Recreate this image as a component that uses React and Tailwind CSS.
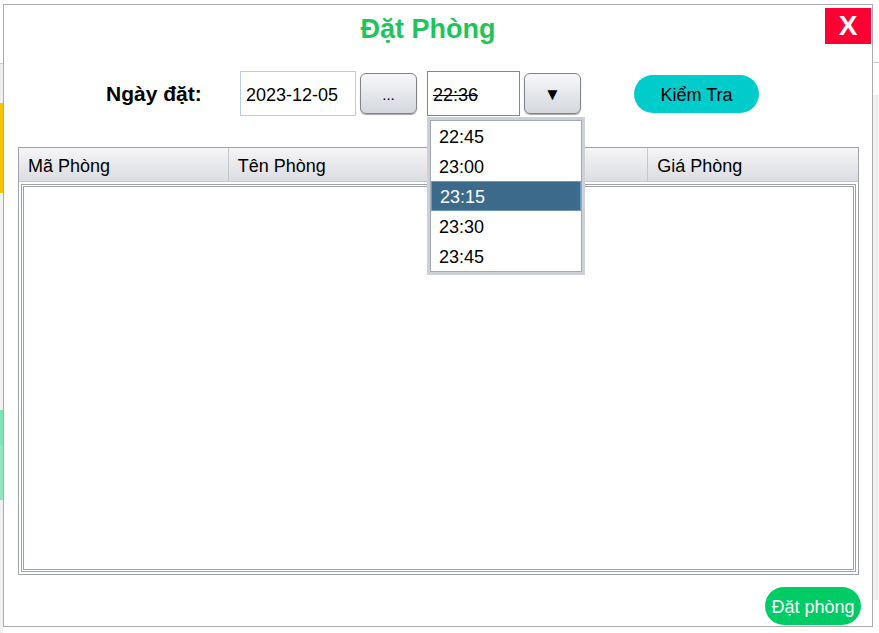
import { useState } from 'react'

const times = ['22:45', '23:00', '23:15', '23:30', '23:45']
// the third header is hidden behind the open combo popup
const columns = ['Mã Phòng', 'Tên Phòng', '', 'Giá Phòng']

const GrayButton = ({ children, className = '' }) => (
  <button
    className={`h-[41px] w-[57px] rounded-[6px] border border-[#808388] bg-gradient-to-b from-[#f7f8fa] to-[#d4d7dd] text-black shadow-[0_1px_1px_rgba(0,0,0,0.35)] flex items-center justify-center ${className}`}
  >
    {children}
  </button>
)

const App = () => {
  const [selected] = useState('23:15')

  return (
    <div className="w-[879px] h-[633px] bg-white overflow-hidden flex font-['Liberation_Sans',Arial,sans-serif] text-black">
      {/* app behind the dialog, left edge */}
      <div className="w-[3px] flex flex-col">
        <div className="h-[63px] bg-white" />
        <div className="h-[40px] bg-[#eeeeee] border-t border-[#c9c9c9]" />
        <div className="h-[90px] bg-[#f7c400]" />
        <div className="h-[217px] bg-[#f3f3f3]" />
        <div className="h-[35px] bg-[#7fe3b5]" />
        <div className="h-[55px] bg-[#8ee8bf]" />
        <div className="flex-1 bg-[#f1f1f1]" />
      </div>

      {/* dialog */}
      <div className="mt-[4px] w-[870px] h-[623px] border border-[#ababab] bg-white flex flex-col">
        <div className="mt-[3px] h-[36px] flex">
          <div className="flex-1 pl-[27px] flex justify-center">
            <h1 className="text-[27px] font-bold text-[#1fc55c] leading-none pt-[8px]">Đặt Phòng</h1>
          </div>
          <button className="mr-[1px] w-[46px] h-[36px] bg-[#ff0033] text-white text-[28px] font-bold leading-none flex items-center justify-center">
            X
          </button>
        </div>

        <div className="mt-[27px] h-[45px] flex items-center pl-[102px]">
          <span className="w-[134px] text-[21px] font-bold">Ngày đặt:</span>
          <div className="w-[116px] h-[45px] border border-[#b7cee6] flex items-center pl-[5px] pt-[3px] text-[18px]">
            2023-12-05
          </div>
          <GrayButton className="ml-[4px] text-[15px] pt-[3px]">...</GrayButton>
          <div className="relative ml-[10px]">
            <div className="w-[93px] h-[45px] border border-[#7c8894] flex items-center pl-[5px] pt-[3px] text-[18px]">
              <span className="line-through">22:36</span>
            </div>
            {/* open combo popup */}
            <div className="absolute z-10 top-[46px] left-0 w-[158px] border-[3px] border-[#cdd0d6] bg-white">
              <div className="border border-[#a2a9b3] flex flex-col">
                {times.map((t) => (
                  <div
                    key={t}
                    className={`h-[30px] flex items-center pl-[8px] pt-[2px] text-[18px] ${
                      t === selected ? 'bg-[#3b6a8b] text-white border border-[#6f9ac0] pl-[7px]' : ''
                    }`}
                  >
                    {t}
                  </div>
                ))}
              </div>
            </div>
          </div>
          <GrayButton className="ml-[4px] text-[17px] pt-[3px]">▼</GrayButton>
          <button className="ml-[53px] w-[125px] h-[38px] rounded-full bg-[#00cccc] text-[18px] pt-[3px] flex items-center justify-center">
            Kiểm Tra
          </button>
        </div>

        <div className="mt-[31px] ml-[14px] w-[841px] h-[428px] border border-[#9ea3ab] flex flex-col">
          <div className="h-[34px] flex bg-gradient-to-b from-[#f5f5f7] to-[#dcdde2] border-b border-[#c3c6cc]">
            {columns.map((c, i) => (
              <div
                key={i}
                className={`w-[210px] flex items-center pl-[9px] pt-[3px] text-[18px] ${i < 3 ? 'border-r border-[#c3c6cc]' : ''}`}
              >
                {c}
              </div>
            ))}
          </div>
          <div className="flex-1 p-[2px]">
            <div className="h-full border-[3px] border-double border-[#9ea3ab] bg-white" />
          </div>
        </div>

        <div className="mt-[12px] flex justify-end pr-[11px]">
          <button className="w-[96px] h-[38px] rounded-full bg-[#00cc66] text-white text-[18px] pt-[3px] flex items-center justify-center">
            Đặt phòng
          </button>
        </div>
      </div>

      {/* app behind the dialog, right edge */}
      <div className="flex-1 flex flex-col">
        <div className="h-[62px]" />
        <div className="h-[1px] bg-[#c8c8c8]" />
        <div className="h-[32px]" />
        <div className="h-[505px] bg-[#f0f0f0]" />
      </div>
    </div>
  )
}

export default App
